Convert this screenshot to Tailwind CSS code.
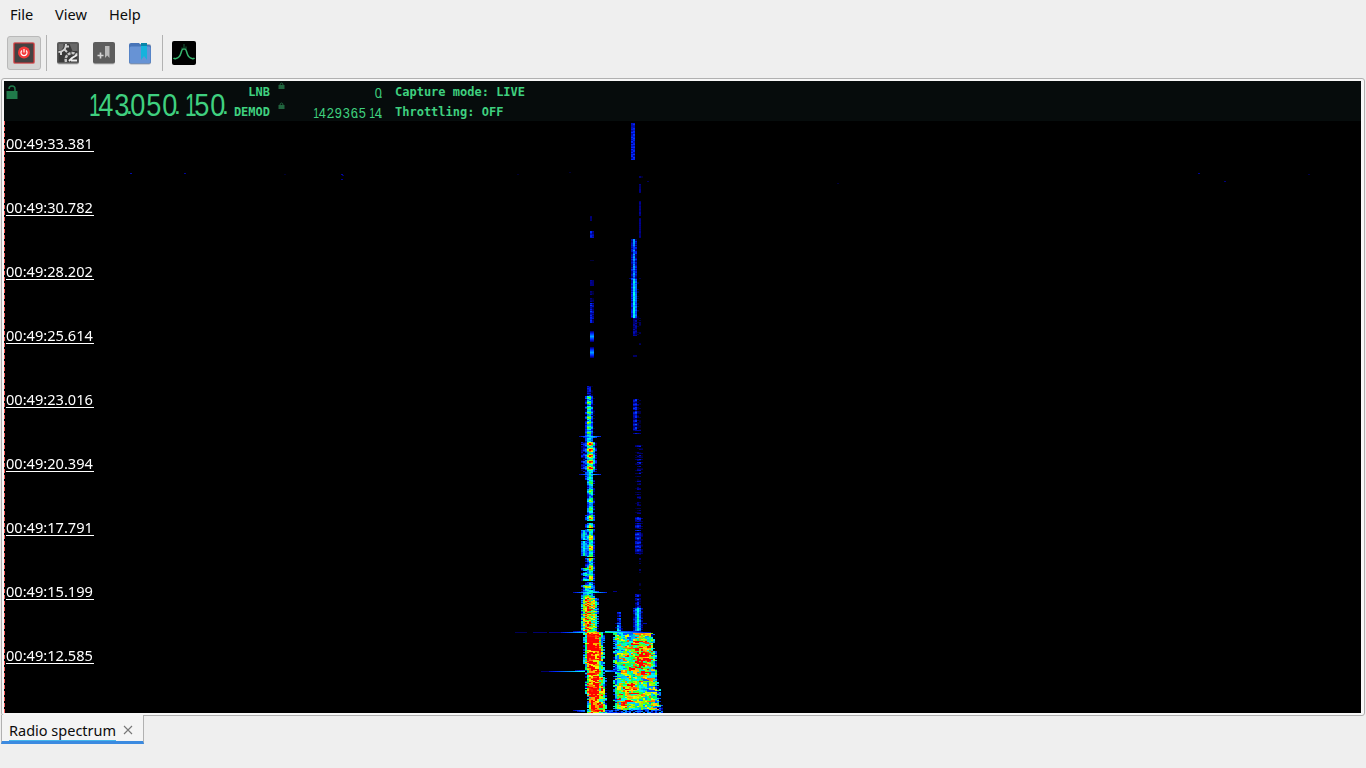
<!DOCTYPE html>
<html lang="en">
<head>
    <meta charset="UTF-8">
    <meta name="viewport" content="width=device-width, initial-scale=1.0">
    <title>Radio spectrum</title>
    <script src="https://cdn.jsdelivr.net/npm/@tailwindcss/browser@4"></script>
</head>
<body class="bg-[#efefef] w-[1366px] h-[768px] overflow-hidden flex flex-col font-['Noto_Sans',sans-serif] text-[14.6px] text-[#0c0c0c]">
    <!-- menu bar -->
    <nav class="h-[30px] flex items-center pl-[10px] pb-[2px] leading-none">
        <span class="w-[45px]">File</span>
        <span class="w-[54px]">View</span>
        <span>Help</span>
    </nav>

    <!-- toolbar -->
    <div class="h-12 flex items-center pb-[2px] pl-[7px]">
        <button class="w-[34px] h-[34px] rounded-[3px] border border-[#b9b9b9] bg-[#d5d6d5] flex items-center justify-center">
            <svg width="24" height="24" viewBox="0 0 24 24">
                <rect x="1" y="1" width="22" height="22" rx="1.5" fill="#c9b5b5"/>
                <rect x="2" y="2" width="20" height="20" rx="1" fill="#434343" stroke="#d8373a" stroke-width="1.2"/>
                <circle cx="12" cy="11.500" r="6" fill="#f43b3b"/>
                <path d="M9.900 9.500a3 3 0 1 0 4.200 0M12 8v3.500" fill="none" stroke="#fff" stroke-width="1.2"/>
            </svg>
        </button>
        <div class="w-px h-9 bg-[#b2b2b2] ml-[5px]"></div>
        <button class="ml-[9px]">
            <svg width="24" height="24" viewBox="0 0 24 24">
                <rect x="1" y="2" width="22" height="21.500" rx="2" fill="#bdbdbd"/>
                <rect x="1" y="1" width="22" height="21.500" rx="2" fill="#5a5a5a"/>
                <rect x="2.500" y="3" width="19" height="18" fill="#3b3b3b"/>
                <path d="M13.500 3h8v7h-5z" fill="#686868"/>
                <path d="M2.500 3h5v3l-2 3h-3z" fill="#6e6e6e"/>
                <path d="M2.500 11c4.500 0 7.500-3 7.500-8" fill="none" stroke="#d2d2d2" stroke-width="2"/>
                <path d="M8.500 8.500l2.500 2.500M10 5.500h3M5 11v3" stroke="#d2d2d2" stroke-width="2"/>
                <path d="M10 21c-1.500-5 2-9 6-9 2.500 0 4 1 5 2" fill="none" stroke="#c6c6c6" stroke-width="2.500" stroke-dasharray="3 1"/>
                <path d="M13 20l3-3 5-3M15 19.500h6" fill="none" stroke="#eee" stroke-width="2"/>
            </svg>
        </button>
        <button class="ml-3">
            <svg width="24" height="24" viewBox="0 0 24 24">
                <rect x="1" y="2" width="22" height="21.500" rx="2" fill="#c5c5c5"/>
                <rect x="1" y="1" width="22" height="21.500" rx="2" fill="#5d5d5d"/>
                <path d="M13 5h4.500v12L15.200 14.500 13 17z" fill="#bababa"/>
                <path d="M5.500 14.500h6M8.500 11.500v6" stroke="#d5d5d5" stroke-width="1.600"/>
            </svg>
        </button>
        <button class="ml-3">
            <svg width="24" height="24" viewBox="0 0 24 24">
                <rect x="1" y="3" width="22" height="20.500" rx="2" fill="#a5acb8"/>
                <path d="M1 4q0-2 2-2h8l2 2h8q2 0 2 2v14.500q0 2-2 2H3q-2 0-2-2z" fill="#4774b8"/>
                <rect x="1.500" y="5.500" width="21" height="16.500" rx="1.500" fill="#6793d5"/>
                <path d="M13 2h6v17l-3-4-3 4z" fill="#15b3dc"/>
                <path d="M13 2h6v3h-6z" fill="#0786aa"/>
            </svg>
        </button>
        <div class="w-px h-9 bg-[#b2b2b2] ml-[10px]"></div>
        <button class="ml-[9px]">
            <svg width="24" height="24" viewBox="0 0 24 24">
                <rect width="24" height="24" rx="2" fill="#000"/>
                <path d="M1.500 17q1 1 2.500.5c2.500-.5 4-2 5-5.500.7-2.500 1-4 2-4h2c1 0 1.300 1.500 2 4 1 3.500 2.500 5 5 5.500q1.500.5 2.500-.5" fill="none" stroke="#35b56c" stroke-width="1.500"/>
                <path d="M12 3v5M14 5.500v2.500M10 6.500v1.500" stroke="#19613a" stroke-width="1"/>
            </svg>
        </button>
    </div>

    <!-- spectrum frame -->
    <main class="ml-px w-[1364px] h-[638px] shrink-0 rounded-[3px] border border-[#b1b1b1] bg-[#f7f7f7] pt-[2px] pl-[2px]">
        <header class="w-[1357px] h-10 bg-[#060c0c] flex text-[#3fd07f]">
            <div class="w-[78px] pl-[2px] pt-1">
                <svg width="13" height="14" viewBox="0 0 13 14">
                    <rect x="0.500" y="6" width="11" height="8" fill="#20794a"/>
                    <path d="M3 4q0-3 3-3t3 3v2" fill="none" stroke="#20794a" stroke-width="1.500"/>
                </svg>
            </div>
            <div id="frequency" class="w-[146px] pt-2 flex text-[32px] leading-8 font-['Liberation_Sans',sans-serif]"></div>
            <div class="w-[42px] flex flex-col text-right font-['DejaVu_Sans_Mono',monospace] font-bold text-xs leading-5">
                <span class="h-5 pt-px">LNB</span>
                <span class="h-5 pt-px">DEMOD</span>
            </div>
            <div class="w-[38px] flex flex-col pl-2">
                <div class="h-5 pt-px">
                    <svg width="7" height="7" viewBox="0 0 7 7"><path d="M.5 3h6v4h-6z" fill="#20643e"/><path d="M2 3q0-2 1.500-2T5 3" fill="none" stroke="#20643e"/></svg>
                </div>
                <div class="h-5 pt-px">
                    <svg width="7" height="7" viewBox="0 0 7 7"><path d="M.5 3h6v4h-6z" fill="#20643e"/><path d="M2 3q0-2 1.500-2T5 3" fill="none" stroke="#20643e"/></svg>
                </div>
            </div>
            <div class="w-[74px] flex flex-col text-[15px] leading-5 font-['Liberation_Sans',sans-serif]">
                <div id="lnb" class="h-5 flex justify-end pt-[2px]"></div>
                <div id="demod" class="h-5 flex justify-end pt-[2px]"></div>
            </div>
            <div class="pl-[13px] flex flex-col font-['DejaVu_Sans_Mono',monospace] font-bold text-xs leading-5">
                <span class="h-5 pt-px">Capture mode: LIVE</span>
                <span class="h-5 pt-px">Throttling: OFF</span>
            </div>
        </header>
        <div class="relative w-[1357px] h-[592px] bg-black">
            <canvas id="waterfall" width="1357" height="592" class="block"></canvas>
            <div class="absolute left-0 top-0 w-px h-full bg-[repeating-linear-gradient(to_bottom,#ff6464_0px,#ff6464_4px,#000_4px,#000_6px)]"></div>
            <div id="times" class="absolute left-[2px] top-[14px] flex flex-col gap-[47px] text-white"></div>
        </div>
    </main>

    <!-- dock tab -->
    <div class="relative -mt-px ml-px w-[143px] h-[29px] shrink-0 border-x border-[#b1b1b1] border-b-3 border-b-[#3b8ae0] bg-[#f4f4f4] flex items-start pl-[7px]">
        <span id="tab" class="w-[107px] h-[26px] pt-[2px] leading-[26px] text-[14.5px] border-b border-[#45b5eb] whitespace-nowrap">Radio spectrum</span>
        <svg class="ml-[7px] mt-[10px]" width="10" height="10" viewBox="0 0 10 10"><path d="M1 1l8 8M9 1L1 9" stroke="#777" stroke-width="1.1"/></svg>
    </div>

    <script>
        // a ones digit sits at the right of its cell, as on an LCD
        function readout(id, value, cell, digit, one, dot) {
            let html = "";
            for (let i = 0; i < value.length; i++) {
                if (value[i] === ".") continue;
                const point = value[i + 1] === "." ? `<span class="${dot}">.</span>` : "";
                html += `<span class="${cell}"><span class="${value[i] === "1" ? one : digit}">${value[i]}</span>${point}</span>`;
            }
            document.getElementById(id).innerHTML = html;
        }

        const small = ["relative w-2 shrink-0 flex justify-center", "inline-block scale-x-85", "inline-block scale-x-70 translate-x-[2px]", "absolute -right-[1px]"];
        readout("frequency", "143.050.150.", "relative w-4 shrink-0 flex justify-center", "inline-block scale-x-85", "inline-block scale-x-65 translate-x-[5px]", "absolute -right-[3px] text-[26px]");
        readout("lnb", "0.", ...small);
        readout("demod", "142.936.514.", ...small);

        const times = ["33.381", "30.782", "28.202", "25.614", "23.016", "20.394", "17.791", "15.199", "12.585"];
        document.getElementById("times").innerHTML = times.map(t =>
            `<span class="w-[88px] h-[17px] leading-[17px] border-b border-white whitespace-nowrap">00:49:${t}</span>`).join("");

        const ctx = document.getElementById("waterfall").getContext("2d");
        ctx.translate(-4, -121);

        // fixed seed so the trace is the same on every load
        let seed = 143050;
        function rnd() {
            seed = (seed * 1664525 + 1013904223) % 4294967296;
            return seed / 4294967296;
        }

        const stops = [[0, 0, 0, 0], [0.06, 0, 0, 60], [0.12, 0, 0, 140], [0.22, 0, 40, 255], [0.36, 0, 160, 255],
            [0.46, 0, 255, 240], [0.56, 0, 255, 100], [0.66, 110, 255, 0], [0.76, 255, 245, 0], [0.86, 255, 120, 0], [0.94, 255, 0, 0], [9, 255, 0, 0]];
        function colour(v) {
            let i = 1;
            while (v > stops[i][0]) i++;
            const a = stops[i - 1], b = stops[i], f = (v - a[0]) / (b[0] - a[0]);
            return `rgb(${[1, 2, 3].map(k => Math.round(a[k] + (b[k] - a[k]) * f)).join(",")})`;
        }

        function cell(x, y, v) {
            if (v < 0.04) return;
            ctx.fillStyle = colour(v);
            ctx.fillRect(x, y, 2, 1);
        }

        // y from, y to, first column, level of each 2px column, noise, chance of an empty row, ripple period
        const bands = [
            [123, 160, 631, [0.17, 0.19], 0.12, 0, 0],
            [176, 178, 639, [0.1, 0.05], 0, 0, 0],
            [184, 193, 639, [0.1], 0.03, 0, 0],
            [201, 216, 639, [0.11, 0.02], 0.04, 0, 0],
            [218, 238, 639, [0.11, 0.01], 0.03, 0, 0],
            [239, 278, 631, [0.15, 0.31, 0.15], 0.13, 0, 0],
            [278, 279, 629, [0.1, 0.25, 0.3, 0.15, 0, 0.07], 0, 0, 0],
            [279, 318, 631, [0.19, 0.43, 0.28, 0.03], 0.1, 0, 0],
            [318, 336, 633, [0.12, 0.11, 0.02, 0.05], 0.08, 0, 0],
            [342, 346, 639, [0.07], 0.04, 0.4, 0],
            [355, 357, 633, [0.1, 0.08], 0.03, 0, 0],
            [399, 430, 633, [0.17, 0.23, 0.08, 0.03], 0.1, 0, 4],
            [430, 434, 633, [0.1, 0.18, 0.15, 0.1], 0.1, 0.4, 0],
            [445, 474, 635, [0.05, 0.12, 0.17, 0.06], 0.12, 0.35, 4],
            [476, 514, 635, [0.04, 0.1, 0.1], 0.08, 0.4, 4],
            [517, 554, 635, [0.18, 0.23, 0.19, 0.06], 0.1, 0.05, 4],
            [554, 574, 639, [0.08], 0.06, 0.5, 0],
            [582, 590, 639, [0.05], 0.05, 0.7, 0],
            [594, 608, 635, [0.14, 0.22, 0.12], 0.12, 0.05, 4],
            [608, 632, 633, [0.13, 0.3, 0.47, 0.3, 0.08], 0.15, 0, 0],
            [216, 221, 590, [0.1], 0.02, 0, 0],
            [231, 238, 590, [0.19, 0.13], 0.08, 0, 0],
            [280, 286, 590, [0.12, 0.1], 0.04, 0, 0],
            [291, 302, 590, [0.1, 0.07], 0.06, 0.2, 0],
            [303, 323, 590, [0.19, 0.12], 0.12, 0, 0],
            [386, 396, 587, [0.15, 0.15, 0.06], 0.13, 0.2, 0],
            [396, 435, 585, [0.22, 0.6, 0.6, 0.3, 0.02], 0.2, 0, 5],
            [435, 442, 585, [0.25, 0.4, 0.42, 0.3], 0.2, 0, 0],
            [442, 472, 581, [0.13, 0.21, 0.33, 0.72, 0.95, 0.85, 0.48, 0.15], 0.18, 0, 6],
            [472, 480, 585, [0.2, 0.4, 0.5, 0.35], 0.2, 0, 0],
            [480, 515, 587, [0.37, 0.58, 0.55, 0.12], 0.2, 0.04, 9],
            [515, 590, 585, [0.18, 0.42, 0.78, 0.7, 0.22], 0.2, 0.03, 10],
            [530, 556, 581, [0.28, 0.46, 0.32], 0.15, 0.03, 0],
            [567, 582, 581, [0.2, 0.45, 0.55, 0.45], 0.25, 0.15, 6],
            [585, 598, 581, [0.2, 0.48, 0.65, 0.65, 0.6, 0.45, 0.3], 0.3, 0, 5],
            [598, 632, 581, [0.38, 0.65, 0.82, 0.85, 0.78, 0.68, 0.62, 0.48, 0.2], 0.5, 0, 0],
            [611, 632, 617, [0.18, 0.23], 0.16, 0.3, 6],
            [623, 632, 615, [0.08, 0.35, 0.3, 0.1], 0.2, 0.1, 0]
        ];
        for (const [y0, y1, x, levels, noise, gap, period] of bands) {
            for (let y = y0; y < y1; y++) {
                if (rnd() < gap) continue;
                const wave = period ? 0.8 + 0.28 * Math.sin((y - y0) * 2 * Math.PI / period) : 1;
                levels.forEach((v, i) => cell(x + i * 2, y, v * wave + (rnd() - 0.5) * noise));
            }
        }

        // two soft pulses above the left trace
        for (const mid of [336, 352]) {
            for (let y = mid - 5; y <= mid + 5; y++) {
                const v = 0.36 - Math.abs(y - mid) * 0.05;
                cell(590, y, v);
                cell(592, y, v);
            }
        }

        // wide burst with ragged edges, the noise carries over between neighbouring cells
        function burst(y0, y1, left, right, level, noise) {
            const above = {};
            for (let y = y0; y < y1; y++) {
                const n = left(y), m = right(y);
                const l = n + Math.floor(rnd() * 1.4) * 2, r = m - Math.floor(rnd() * 1.6) * 2;
                let last = rnd();
                for (let x = l; x <= r; x += 2) {
                    const pick = rnd();
                    if (pick > 0.6) last = rnd();
                    else if (pick > 0.3 && above[x] !== undefined) last = above[x];
                    above[x] = last;
                    const edge = Math.min(1, (x - n + 3) / 7, (m - x + 3) / 7);
                    cell(x, y, edge * level(x, y) + (last - 0.5) * noise);
                }
            }
        }
        burst(632, 713, y => 583 + 2 * Math.floor((y - 632) / 32), y => 603 + 2 * Math.floor((y - 632) / 45),
            (x, y) => x > 585 && x < 599 ? 0.98 : 0.74, 0.52);
        burst(633, 710, y => 613, y => 653 + 2 * Math.floor((y - 633) / 18),
            (x, y) => {
                const a = Math.hypot((x - 641) / 15, (y - 656) / 18), b = Math.hypot((x - 628) / 14, (y - 693) / 14);
                return 0.56 + 0.2 * Math.max(0, 1.4 - Math.min(a, b));
            }, 0.62);

        // horizontal splashes: row, from, to, centre, level
        const splashes = [[436, 579, 601, 590, 0.45], [437, 583, 597, 590, 0.4], [474, 579, 601, 590, 0.45],
            [592, 573, 607, 590, 0.55], [591, 581, 599, 590, 0.5], [632, 559, 650, 598, 0.62], [631, 573, 640, 600, 0.45],
            [671, 547, 620, 595, 0.6], [670, 575, 616, 595, 0.45], [710, 573, 612, 593, 0.55], [711, 577, 607, 593, 0.5]];
        for (const [y, x0, x1, c, v] of splashes) {
            for (let x = x0; x < x1; x += 2) {
                if (y > 630 && x > 583 && x < 605) continue;
                const side = x < c ? (x - x0) / (c - x0) : (x1 - x) / (x1 - c);
                cell(x, y, 0.15 + (v - 0.15) * side);
            }
        }
        for (const [x, y, n, v] of [[515, 632, 6, 0.08], [533, 632, 7, 0.1], [549, 632, 6, 0.12], [541, 671, 4, 0.1],
            [130, 173, 1, 0.15], [184, 173, 1, 0.13], [284, 174, 1, 0.05], [341, 174, 1, 0.14], [342, 175, 1, 0.1], [341, 179, 1, 0.13],
            [517, 174, 1, 0.05], [569, 172, 1, 0.06], [837, 183, 1, 0.06], [1198, 173, 1, 0.13], [1224, 181, 1, 0.11], [1308, 174, 1, 0.07],
            [590, 260, 2, 0.06], [613, 591, 2, 0.12], [643, 623, 2, 0.15], [647, 181, 1, 0.08]]) {
            for (let i = 0; i < n; i++) cell(x + i * 2, y, v);
        }
        // tail at the lower right edge
        for (let y = 706; y < 713; y++) {
            for (let x = 655; x < 663; x += 2) cell(x, y, rnd() * 0.4);
        }
        for (let y = 710; y < 713; y++) {
            for (let x = 607; x < 655; x += 2) cell(x, y, rnd() * 0.35);
        }
    </script>
</body>
</html>
